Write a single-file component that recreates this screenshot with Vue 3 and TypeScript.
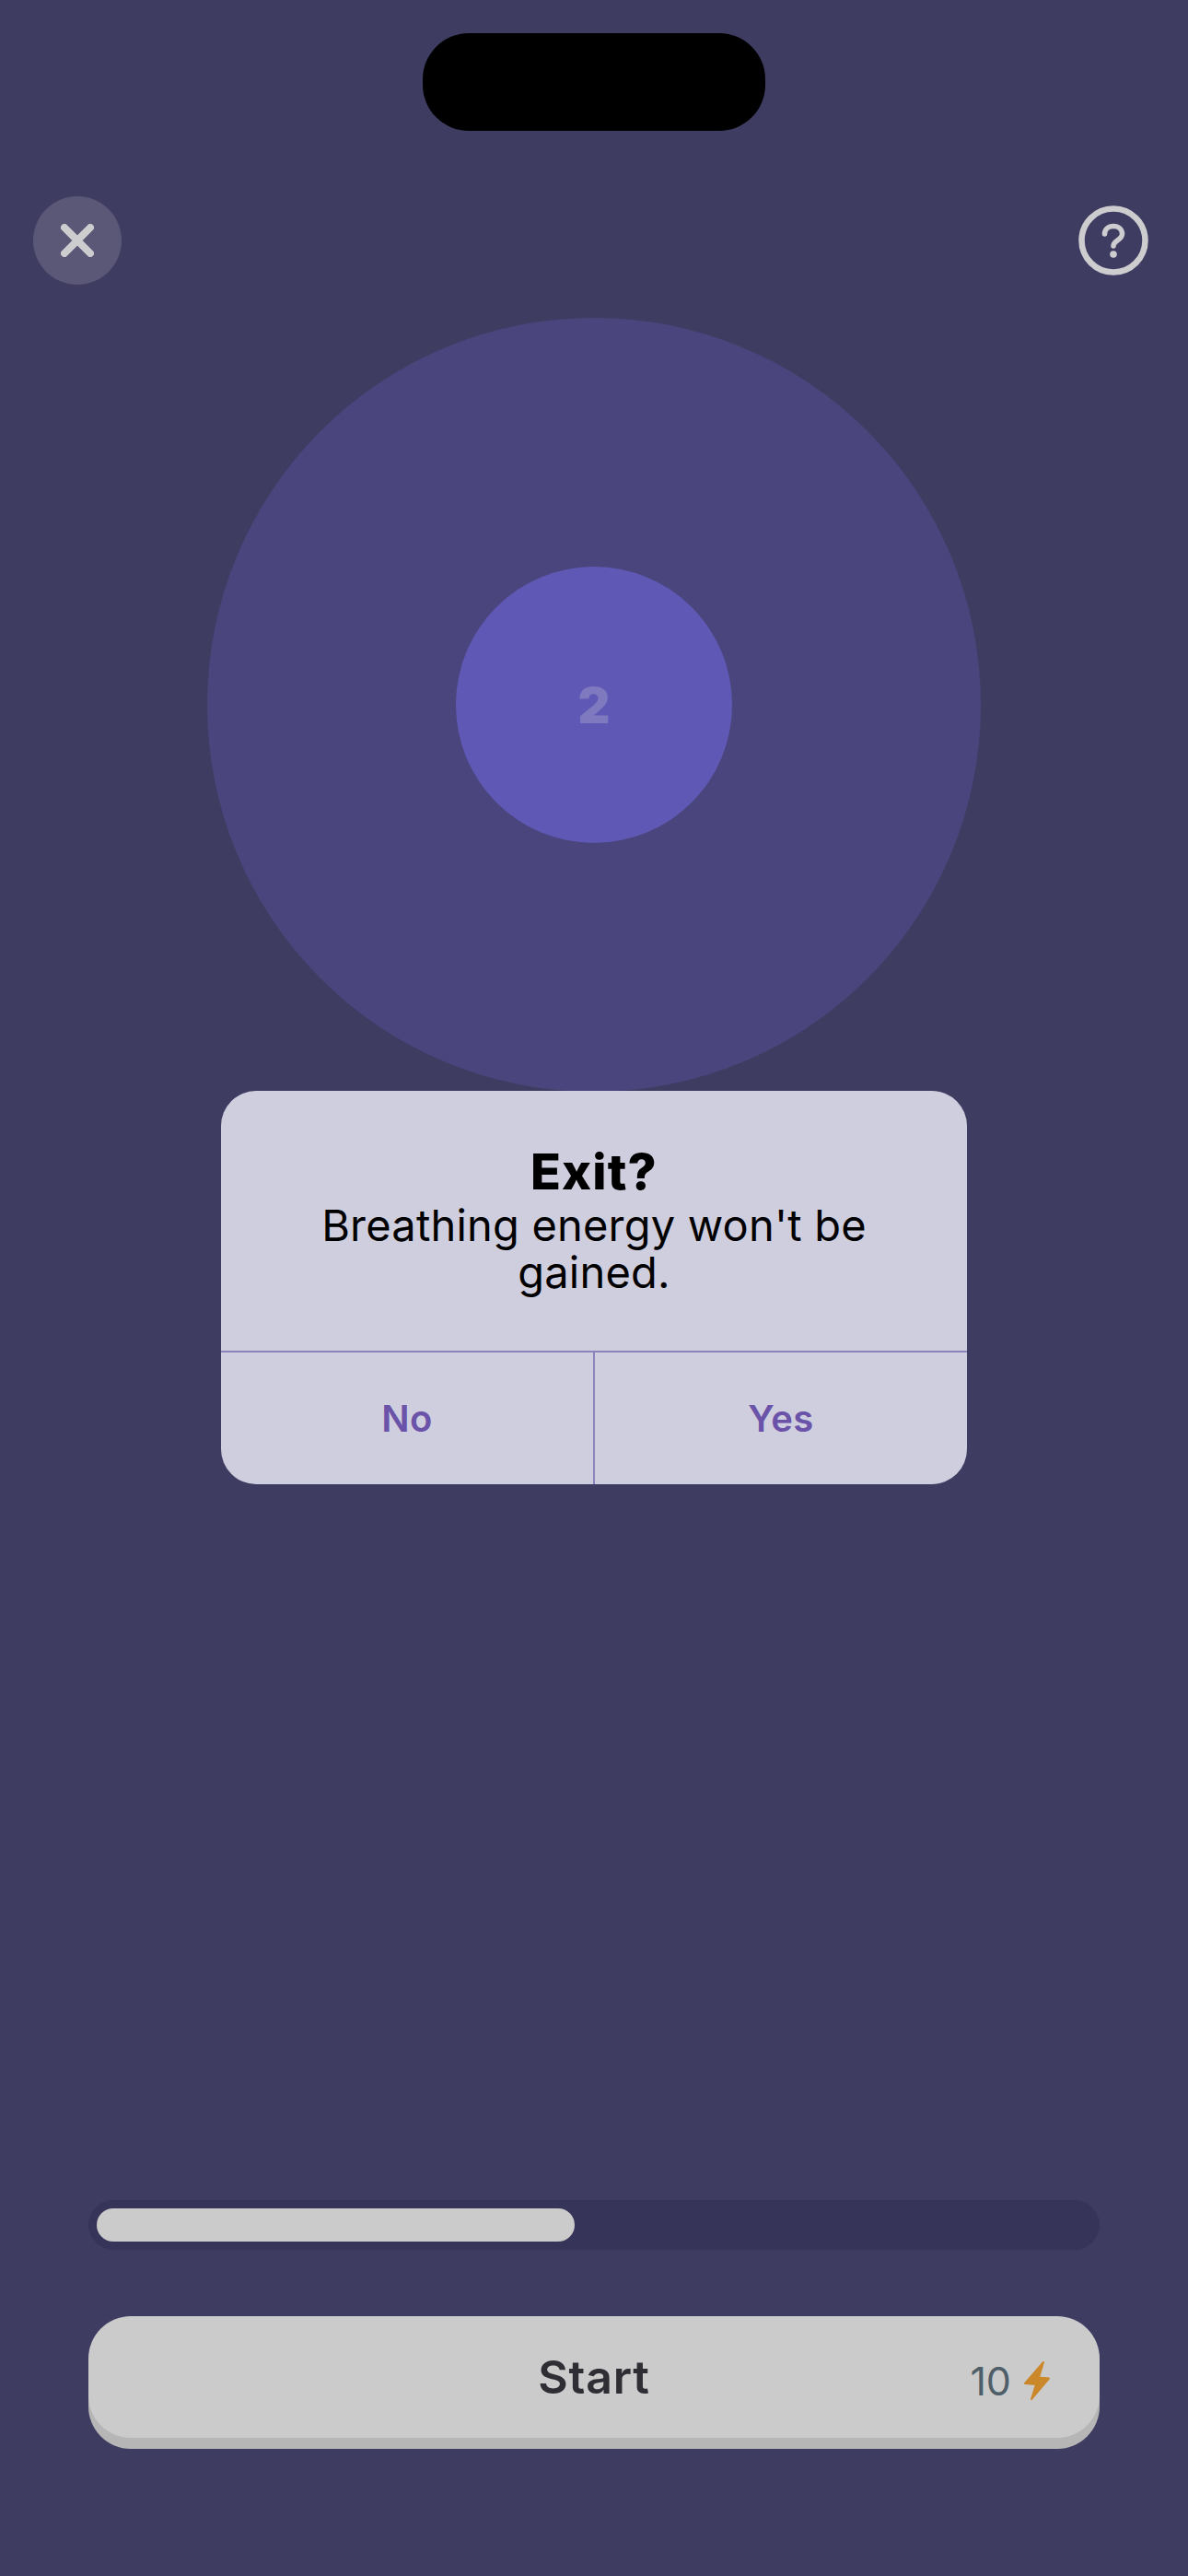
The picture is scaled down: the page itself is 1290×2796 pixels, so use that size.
<script setup lang="ts">
import { ref } from 'vue'

// progress of the breathing session, in percent of the inner track
const progress = ref(48.1)
const count = ref(2)
const cost = ref(10)
</script>

<template>
  <div class="screen">
    <div class="notch"></div>

    <header class="top-bar">
      <button class="close-btn" aria-label="Close">
        <svg width="36" height="36" viewBox="0 0 36 36" fill="none" stroke="#cdcdd0" stroke-width="8" stroke-linecap="round">
          <path d="M4 4 32 32M32 4 4 32" />
        </svg>
      </button>
      <button class="help-btn" aria-label="Help">
        <svg width="76" height="76" viewBox="0 0 76 76" fill="none" stroke="#cdcdd0" stroke-linecap="round" stroke-linejoin="round">
          <circle cx="38" cy="38" r="34.500" stroke-width="6.500" />
          <path d="M28.500 31c0-5 4-8.500 9.500-8.500s9.500 3.500 9.500 8.500c0 6.500-9.500 7-9.500 13" stroke-width="5.500" />
          <circle cx="38" cy="53" r="3.800" fill="#cdcdd0" stroke="none" />
        </svg>
      </button>
    </header>

    <div class="breath-outer">
      <div class="breath-inner">{{ count }}</div>
    </div>

    <div class="bottom">
      <div class="track">
        <div class="fill" :style="{ width: progress + '%' }"></div>
      </div>
      <button class="start-btn">
        <span class="start-label">Start</span>
        <span class="cost">
          {{ cost }}
          <svg width="30" height="44" viewBox="0 0 30 44">
            <path d="M22 2 2 25 14 26 9 42 28 19.500 17 18.500Z" fill="#cb882a" stroke="#cb882a" stroke-width="2" stroke-linejoin="round" />
          </svg>
        </span>
      </button>
    </div>

    <div class="overlay">
      <div class="dialog">
        <div class="dialog-body">
          <div class="dialog-title">Exit?</div>
          <div class="dialog-text">Breathing energy won't be gained.</div>
        </div>
        <div class="dialog-actions">
          <button class="dialog-btn">No</button>
          <div class="dialog-sep"></div>
          <button class="dialog-btn">Yes</button>
        </div>
      </div>
    </div>
  </div>
</template>

<style>
html,
body {
  margin: 0;
  background: #3f3c62;
}
</style>

<style scoped>
.screen {
  position: relative;
  width: 1290px;
  height: 2796px;
  display: flex;
  flex-direction: column;
  align-items: center;
  background: #3f3c62;
  font-family: Inter, "Liberation Sans", sans-serif;
  overflow: hidden;
}

button {
  border: none;
  background: none;
  padding: 0;
  font-family: inherit;
}

.notch {
  width: 372px;
  height: 106px;
  margin-top: 36px;
  border-radius: 50px;
  background: #000;
}

.top-bar {
  align-self: stretch;
  height: 96px;
  margin-top: 71px;
  padding: 0 43px 0 36px;
  display: flex;
  align-items: center;
  justify-content: space-between;
}

.close-btn {
  width: 96px;
  height: 96px;
  border-radius: 50%;
  background: #5b5777;
  display: flex;
  align-items: center;
  justify-content: center;
}

.help-btn {
  width: 76px;
  height: 76px;
  display: flex;
}

.breath-outer {
  width: 840px;
  height: 840px;
  margin-top: 36px;
  border-radius: 50%;
  background: #4a457d;
  display: flex;
  align-items: center;
  justify-content: center;
}

.breath-inner {
  width: 300px;
  height: 300px;
  border-radius: 50%;
  background: #5f59b5;
  color: #7f79c0;
  font-size: 54px;
  font-weight: 900;
  display: flex;
  align-items: center;
  justify-content: center;
}

.bottom {
  margin-top: auto;
  padding-bottom: 138px;
  width: 1098px;
  display: flex;
  flex-direction: column;
  gap: 72px;
}

.track {
  height: 54px;
  padding: 9px;
  box-sizing: border-box;
  border-radius: 27px;
  background: #37345a;
}

.fill {
  height: 36px;
  border-radius: 18px;
  background: #cbcbcb;
}

.start-btn {
  position: relative;
  height: 132px;
  margin-bottom: 12px;
  border-radius: 46px;
  background: #cbcbcb;
  box-shadow: 0 12px 0 #b6b6b6;
  display: flex;
  align-items: center;
  justify-content: center;
}

.start-label {
  font-size: 50px;
  font-weight: 600;
  letter-spacing: 0.800px;
  color: #2f2e35;
}

.cost {
  position: absolute;
  right: 53px;
  top: 44px;
  display: flex;
  align-items: center;
  gap: 13px;
  font-size: 43px;
  color: #4f5f69;
}

.overlay {
  position: absolute;
  inset: 0;
  padding-top: 1184px;
  display: flex;
  justify-content: center;
  align-items: flex-start;
}

.dialog {
  width: 810px;
  height: 427px;
  border-radius: 38px;
  background: #cfcedf;
  display: flex;
  flex-direction: column;
  overflow: hidden;
}

.dialog-body {
  flex: 1;
  padding: 56px 90px 0;
  text-align: center;
  color: #000;
}

.dialog-title {
  font-size: 54px;
  font-weight: 800;
  letter-spacing: 1.200px;
  line-height: 64px;
}

.dialog-text {
  font-size: 47px;
  letter-spacing: 0.200px;
  line-height: 51px;
}

.dialog-actions {
  height: 143px;
  border-top: 2px solid #8a84bb;
  display: grid;
  grid-template-columns: 1fr 2px 1fr;
}

.dialog-sep {
  background: #8a84bb;
}

.dialog-btn {
  font-size: 40px;
  font-weight: 600;
  letter-spacing: 0.400px;
  color: #6a53a8;
}
</style>
